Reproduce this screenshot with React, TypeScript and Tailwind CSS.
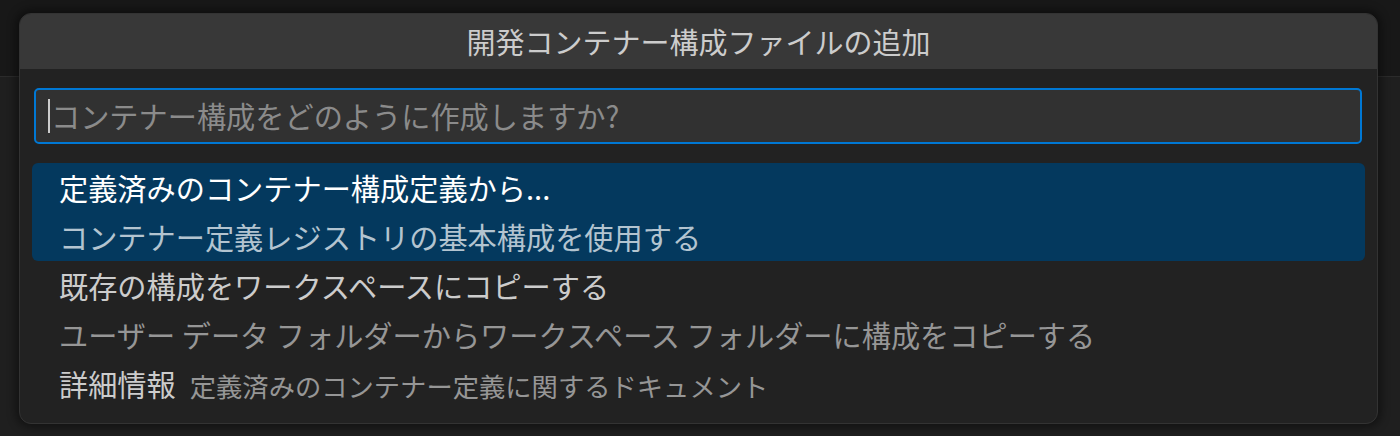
import React from "react";

type Pick = {
  label: string;
  detail?: string;
  inline?: string;
  selected?: boolean;
};

const picks: Pick[] = [
  {
    label: "定義済みのコンテナー構成定義から...",
    detail: "コンテナー定義レジストリの基本構成を使用する",
    selected: true,
  },
  {
    label: "既存の構成をワークスペースにコピーする",
    detail: "ユーザー データ フォルダーからワークスペース フォルダーに構成をコピーする",
  },
  {
    label: "詳細情報",
    inline: "定義済みのコンテナー定義に関するドキュメント",
  },
];

const font = { fontFamily: "'Noto Sans CJK JP', 'Noto Sans', sans-serif" };

const PickRow = ({ pick }: { pick: Pick }) => {
  return (
    <div
      className={`rounded-[6px] px-[27px] ${pick.selected ? "bg-[#04395e]" : ""}`}
    >
      <div className="h-[49px] flex items-center gap-[14px] whitespace-nowrap">
        <span
          className={`text-[29.2px] leading-[49px] ${pick.selected ? "text-white" : "text-[#cccccc]"}`}
        >
          {pick.label}
        </span>
        {pick.inline && (
          <span className="text-[26.3px] leading-[49px] text-[#969696] pt-[3px]">
            {pick.inline}
          </span>
        )}
      </div>
      {pick.detail && (
        <div
          className={`h-[49px] flex items-center text-[29.2px] leading-[49px] whitespace-nowrap ${pick.selected ? "text-[#b3c4d0]" : "text-[#969696]"}`}
        >
          {pick.detail}
        </div>
      )}
    </div>
  );
};

export default function App() {
  return (
    <div className="w-[1400px] h-[436px] relative overflow-hidden flex flex-col bg-[#1f1f1f]" style={font}>
      {/* editor chrome behind the quick input */}
      <div className="h-[77px] bg-[#181818] border-b border-[#2b2b2b]" />
      <div className="flex-1 bg-[#1f1f1f]" />

      <div className="absolute left-[19px] top-[13px] w-[1359px] h-[411px] rounded-[12px] border border-[#333333] bg-[#222222] overflow-hidden shadow-[0_0_10px_3px_rgba(0,0,0,0.45)]">
        <div className="h-[55px] bg-[#383838] flex items-center justify-center text-[29px] text-[#cccccc] leading-none">
          開発コンテナー構成ファイルの追加
        </div>

        <div className="pt-[19px] pl-[14px] pr-[15px]">
          <div className="h-[56px] rounded-[5px] border-2 border-[#0078d4] bg-[#313131] flex items-center pl-[12px]">
            <div className="w-[2px] h-[34px] bg-[#cccccc]" />
            <span className="ml-[1px] text-[29.2px] leading-none text-[#8b8b8b] whitespace-nowrap">
              コンテナー構成をどのように作成しますか?
            </span>
          </div>
        </div>

        <div className="pt-[19px] px-[12px] flex flex-col">
          {picks.map((p) => (
            <PickRow key={p.label} pick={p} />
          ))}
        </div>
      </div>
    </div>
  );
}
